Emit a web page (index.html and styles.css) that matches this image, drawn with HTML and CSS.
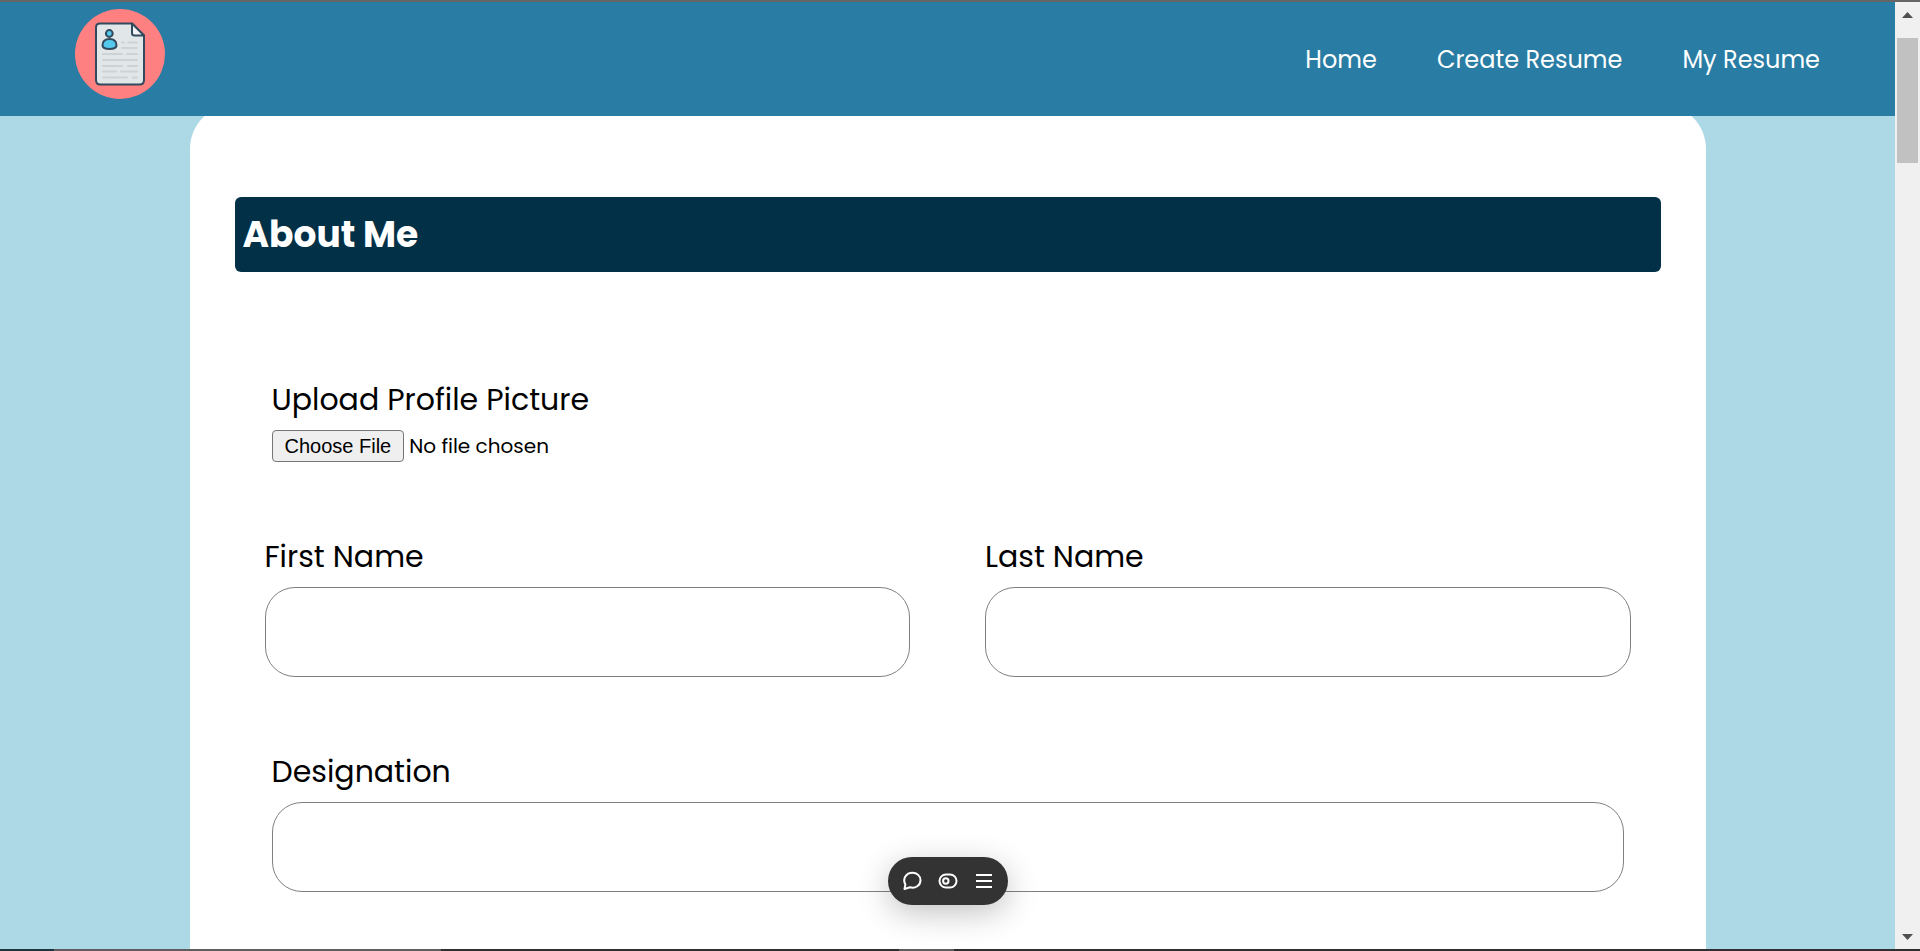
FILE: index.html
```html
<!DOCTYPE html>
<html lang="en">
<head>
<meta charset="utf-8">
<title>Create Resume</title>
<link rel="stylesheet" href="styles.css">
</head>
<body>
<div class="edge-top"></div>
<div class="viewport">
  <div class="page">
    <header class="site-header">
      <a class="logo" href="#" aria-label="Resume builder">
        <svg viewBox="0 0 90 90" width="90" height="90" aria-hidden="true">
          <circle cx="45" cy="45" r="45" fill="#ff8080"/>
          <path d="M25 14.500H57L69 26.500V71Q69 75.500 64.500 75.500H25.500Q21 75.500 21 71V18.500Q21 14.500 25 14.500Z" fill="#e1e6e9" stroke="#324a5e" stroke-width="2" stroke-linejoin="round"/>
          <path d="M57 14.500V24Q57 26.500 59.500 26.500H69Z" fill="#f1f3f4" stroke="#324a5e" stroke-width="2" stroke-linejoin="round"/>
          <circle cx="34.300" cy="24.500" r="3.400" fill="#54c9ed" stroke="#324a5e" stroke-width="2"/>
          <path d="M27.500 36.500Q27.500 30 34.500 30T41.500 36.500Q41 40 34.500 40T27.500 36.500Z" fill="#54c9ed" stroke="#324a5e" stroke-width="2"/>
          <path d="M47 33.500H49M53.500 33.500H62M47 39H62M28 45H47M52 45H62M28 51H62M28 57H47M53 57H62M28 62.500H41M46 62.500H62M28 68.500H52M58 68.500H62" stroke="#cdd2d5" stroke-width="2" stroke-linecap="round"/>
        </svg>
      </a>
      <nav class="nav">
        <a href="#">Home</a>
        <a href="#">Create Resume</a>
        <a href="#">My Resume</a>
      </nav>
    </header>
    <main class="card">
      <h1 class="section-title">About Me</h1>
      <form class="form">
        <div class="field inset">
          <label for="picture">Upload Profile Picture</label>
          <input class="file" id="picture" type="file">
        </div>
        <div class="pair">
          <div class="field">
            <label for="first">First Name</label>
            <input class="text" id="first" type="text">
          </div>
          <div class="field">
            <label for="last">Last Name</label>
            <input class="text" id="last" type="text">
          </div>
        </div>
        <div class="field inset">
          <label for="designation">Designation</label>
          <input class="text" id="designation" type="text">
        </div>
      </form>
    </main>
    <div class="toolbar">
      <button type="button" aria-label="Comment">
        <svg viewBox="0 0 20 20" width="20" height="20"><path d="M2.500 18 3.400 13.500C.2 8 4 1.700 10.500 1.700C15 1.700 18.500 5 18.500 9.200C18.500 14.500 13.500 17.700 8 16.300Z"/></svg>
      </button>
      <button type="button" aria-label="Preview">
        <svg viewBox="0 0 20 20" width="20" height="20"><rect x="1.500" y="3.500" width="17" height="13" rx="6.500"/><circle cx="7.800" cy="10" r="2.700"/></svg>
      </button>
      <button type="button" aria-label="Menu">
        <svg viewBox="0 0 20 20" width="20" height="20"><path d="M2 4H18M2 10H18M2 16H18"/></svg>
      </button>
    </div>
  </div>
  <div class="scrollbar" aria-hidden="true">
    <svg class="arrow" viewBox="0 0 11 6" width="11" height="6"><path d="M0 6 5.500 0 11 6Z"/></svg>
    <div class="track"><div class="thumb"></div></div>
    <svg class="arrow" viewBox="0 0 11 6" width="11" height="6"><path d="M0 0 5.500 6 11 0Z"/></svg>
  </div>
</div>
<div class="edge-bottom"></div>
</body>
</html>
```

FILE: styles.css
```css
* { box-sizing: border-box; }

body {
  margin: 0;
  height: 100vh;
  display: grid;
  grid-template-rows: 2px minmax(0, 1fr) 2px;
  overflow: hidden;
  font-family: Poppins, Inter, sans-serif;
  color: #000;
}

.edge-top { background: #666; }

.edge-bottom {
  background: linear-gradient(to right, #20323b 54px, #5f5c5c 54px 441px, #302d2f 441px 899px, #5f5c5c 899px 954px, #302d2f 954px);
}

.viewport {
  display: grid;
  grid-template-columns: minmax(0, 1fr) 25px;
  min-height: 0;
}

.page {
  position: relative;
  overflow: hidden;
  background: #add8e6;
}

.site-header {
  position: relative;
  z-index: 1;
  display: flex;
  justify-content: space-between;
  align-items: center;
  height: 114px;
  padding: 0 75px;
  background: #297ca3;
}

.logo {
  align-self: flex-start;
  padding-top: 7px;
}

.logo svg { display: block; }

.nav {
  display: flex;
  gap: 60px;
}

.nav a {
  color: #fff;
  font-size: 24px;
  font-weight: 400;
  text-decoration: none;
}

.card {
  width: 80%;
  min-height: 100%;
  margin: -12px auto 0;
  padding: 93px 45px 60px;
  border-radius: 45px;
  background: #fff;
}

.section-title {
  margin: 0;
  padding: 0 8px;
  border-radius: 6px;
  background: #023047;
  color: #fff;
  font-size: 36px;
  font-weight: 700;
  line-height: 75px;
}

.form {
  display: flex;
  flex-direction: column;
  gap: 72px;
  padding: 105px 30px 0;
}

.field {
  display: flex;
  flex-direction: column;
  gap: 8px;
}

.inset { padding: 0 7px; }

.pair {
  display: grid;
  grid-template-columns: 1fr 1fr;
  gap: 75px;
}

.field label {
  font-size: 30px;
  font-weight: 400;
  line-height: 45px;
}

.file {
  align-self: flex-start;
  font-family: inherit;
  font-size: 20px;
  font-weight: 400;
}

.file::file-selector-button {
  height: 32px;
  margin: 0 5px 0 0;
  padding: 0 12px;
  border: 1px solid #767676;
  border-radius: 4px;
  background: #efefef;
  font: 20px "Liberation Sans", Arial, sans-serif;
}

.text {
  width: 100%;
  height: 90px;
  padding: 0 24px;
  border: 1px solid #808080;
  border-radius: 30px;
  background: #fff;
  font: inherit;
  font-size: 24px;
}

.toolbar {
  position: absolute;
  bottom: 44px;
  left: 50%;
  transform: translateX(-50%);
  display: flex;
  gap: 4px;
  padding: 8px;
  border-radius: 24px;
  background: #333;
  box-shadow: 0 8px 32px rgba(0, 0, 0, 0.24);
}

.toolbar button {
  display: grid;
  place-items: center;
  width: 32px;
  height: 32px;
  padding: 0;
  border: 0;
  background: none;
}

.toolbar svg {
  fill: none;
  stroke: #fff;
  stroke-width: 2;
  stroke-linejoin: round;
}

.scrollbar {
  display: flex;
  flex-direction: column;
  align-items: center;
  gap: 20px;
  padding: 10px 2px 9px;
  background: #f0f0f0;
}

.arrow { fill: #505050; }

.track {
  flex: 1;
  width: 100%;
}

.thumb {
  height: 125px;
  background: #c1c1c1;
}
```
